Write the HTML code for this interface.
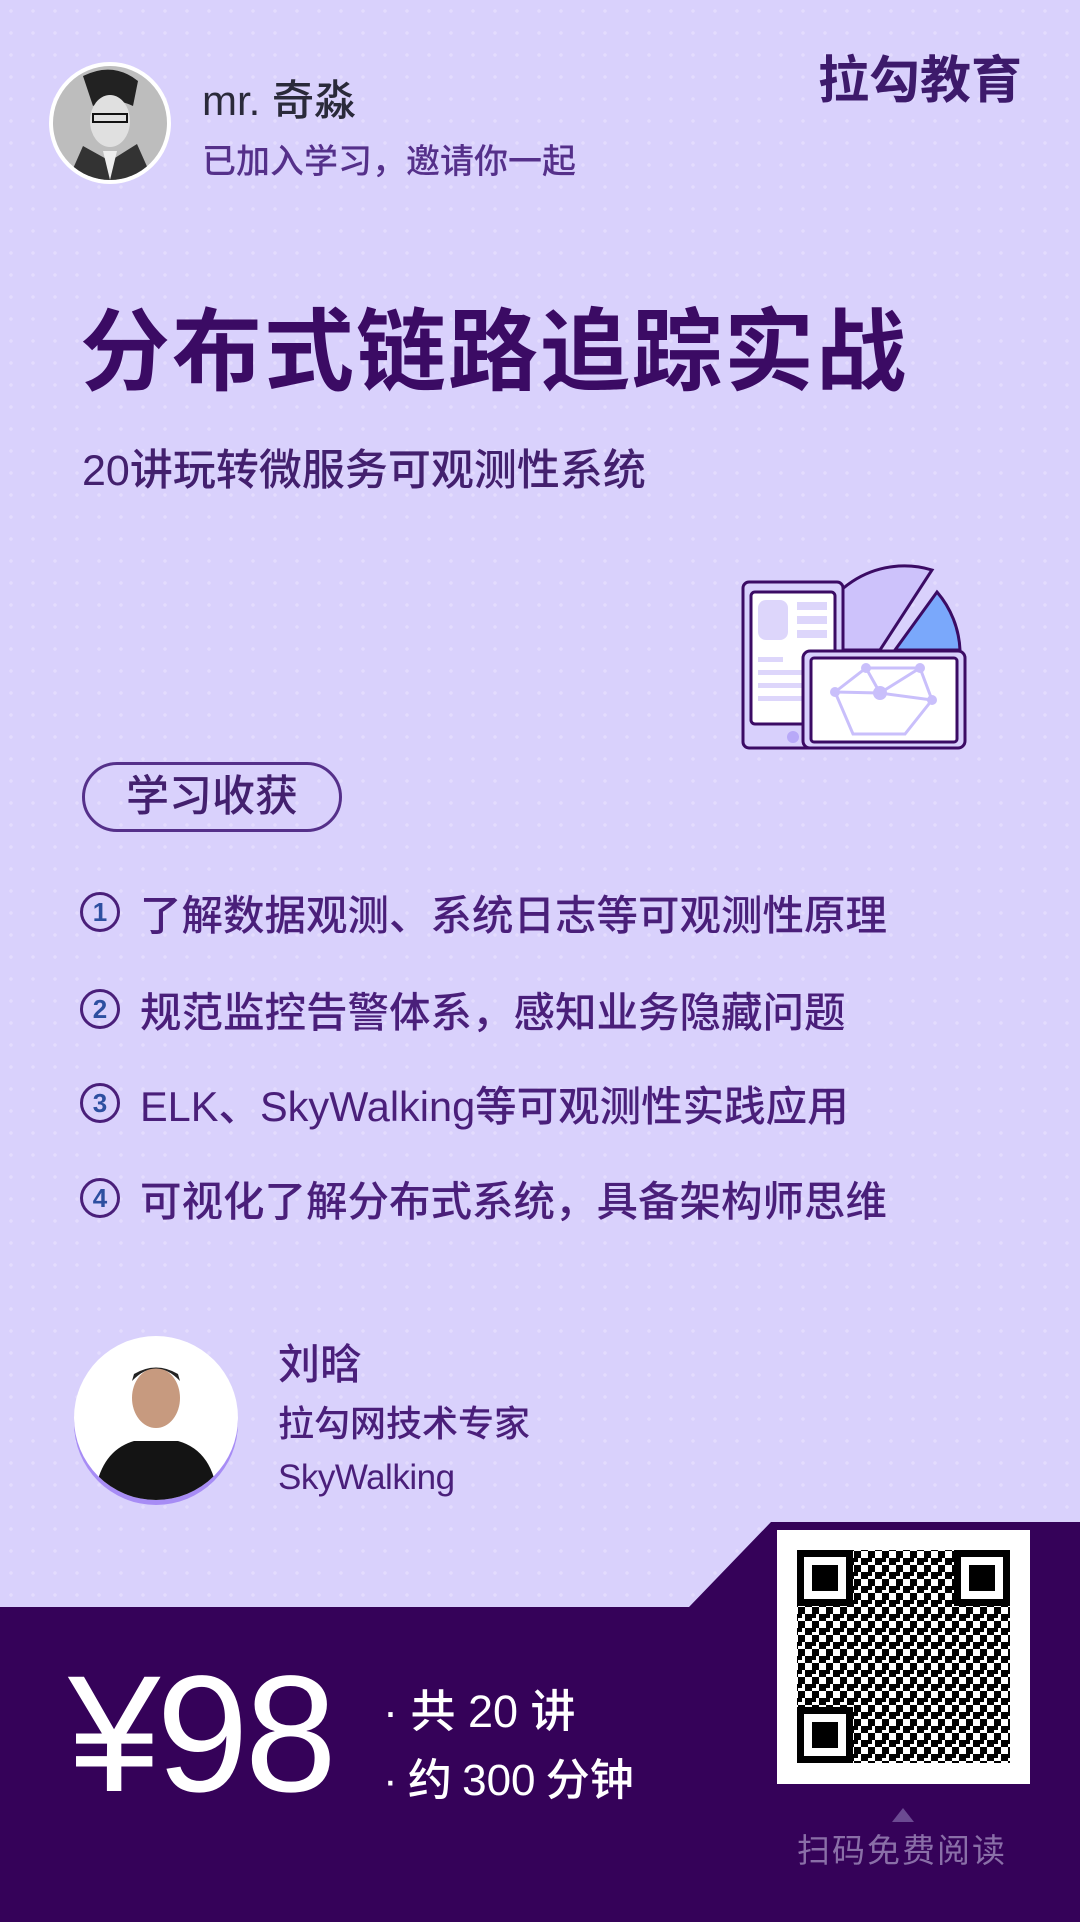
<!DOCTYPE html>
<html><head><meta charset="utf-8"><style>
*{margin:0;padding:0;box-sizing:border-box}
body{width:1080px;height:1922px;position:relative;overflow:hidden;background:#d9d1fc;font-family:"Liberation Sans","Noto Sans CJK SC",sans-serif;
background-image:radial-gradient(circle,#e3dcfd 1.5px,transparent 2px);background-size:22px 22px}
.a{position:absolute;white-space:nowrap;line-height:1}
.item{position:absolute;left:80px;display:flex;align-items:center;color:#4a1f7a;font-size:41.5px;font-weight:500}
.num{width:40px;height:40px;border:3px solid #4a1f7a;border-radius:50%;font-size:26px;display:flex;align-items:center;justify-content:center;color:#2d4fa0;margin-right:20px;font-weight:bold}
</style></head><body>
<div class="a" style="left:49px;top:62px;width:122px;height:122px;border-radius:50%;background:#fff;padding:4px">
<svg width="114" height="114" viewBox="0 0 114 114"><clipPath id="c"><circle cx="57" cy="57" r="57"/></clipPath><g clip-path="url(#c)"><rect width="114" height="114" fill="#bdbdbd"/><path d="M30 10 Q60 -5 85 15 L80 40 Q60 30 40 40Z" fill="#222"/><ellipse cx="57" cy="55" rx="20" ry="26" fill="#e0e0e0"/><path d="M15 114 L30 80 L57 95 L84 78 L100 114Z" fill="#333"/><path d="M50 85 L57 114 L64 85Z" fill="#eee"/><rect x="40" y="48" width="34" height="8" fill="none" stroke="#111" stroke-width="2"/></g></svg></div>
<div class="a" style="left:202px;top:80px;font-size:42px;color:#2a2a3a;font-weight:500">mr. 奇淼</div>
<div class="a" style="left:202px;top:145px;font-size:34px;color:#55308a;font-weight:500">已加入学习，邀请你一起</div>
<div class="a" style="left:818px;top:55px;font-size:51px;font-weight:bold;color:#3d1a6b">拉勾教育</div>
<div class="a" style="left:80px;top:308px;font-size:90px;font-weight:bold;color:#3b0b64;letter-spacing:2px">分布式链路追踪实战</div>
<div class="a" style="left:82px;top:450px;font-size:43px;color:#43206e;font-weight:500">20讲玩转微服务可观测性系统</div>
<svg class="a" style="left:730px;top:545px" width="250" height="215" viewBox="730 545 250 215">
<path d="M810 650 A95 95 0 0 1 932 570 L880 650Z" fill="#cdc2fb" stroke="#3b0b64" stroke-width="3"/>
<path d="M895 650 L937 592 A95 95 0 0 1 960 650Z" fill="#7aa8fb" stroke="#3b0b64" stroke-width="3"/>
<rect x="743" y="582" width="100" height="166" rx="6" fill="#d8d0fc" stroke="#3b0b64" stroke-width="3"/>
<rect x="751" y="592" width="84" height="132" rx="4" fill="#fff" stroke="#3b0b64" stroke-width="3"/>
<rect x="758" y="600" width="30" height="40" rx="8" fill="#ddd6fb"/>
<rect x="797" y="602" width="30" height="8" fill="#ddd6fb"/><rect x="797" y="616" width="30" height="8" fill="#ddd6fb"/><rect x="797" y="630" width="30" height="8" fill="#ddd6fb"/>
<rect x="758" y="657" width="25" height="5" fill="#ddd6fb"/><rect x="758" y="670" width="60" height="5" fill="#ddd6fb"/><rect x="758" y="683" width="60" height="5" fill="#ddd6fb"/><rect x="758" y="696" width="60" height="5" fill="#ddd6fb"/>
<circle cx="793" cy="737" r="6" fill="#b8a9f8"/>
<rect x="803" y="651" width="162" height="97" rx="7" fill="#d8d0fc" stroke="#3b0b64" stroke-width="3"/>
<rect x="811" y="658" width="146" height="84" rx="3" fill="#fff" stroke="#3b0b64" stroke-width="3"/>
<g stroke="#c9bffb" stroke-width="3" fill="none"><path d="M835 692 L866 668 L920 668 L932 700 L905 734 L853 734 Z M866 668 L880 693 L920 668 M835 692 L880 693 L932 700"/></g>
<g fill="#c9bffb"><circle cx="835" cy="692" r="5"/><circle cx="866" cy="668" r="5"/><circle cx="920" cy="668" r="5"/><circle cx="932" cy="700" r="5"/><circle cx="880" cy="693" r="7"/></g>
</svg>
<div class="a" style="left:82px;top:762px;width:260px;height:70px;border:3px solid #55308a;border-radius:35px;font-size:43px;color:#43206e;display:flex;align-items:center;justify-content:center;font-weight:500">学习收获</div>
<div class="item" style="top:882px"><span class="num">1</span>了解数据观测、系统日志等可观测性原理</div>
<div class="item" style="top:979px"><span class="num">2</span>规范监控告警体系，感知业务隐藏问题</div>
<div class="item" style="top:1073px"><span class="num">3</span>ELK、SkyWalking等可观测性实践应用</div>
<div class="item" style="top:1168px"><span class="num">4</span>可视化了解分布式系统，具备架构师思维</div>
<div class="a" style="left:74px;top:1336px;width:164px;height:164px;border-radius:50%;background:#fff;box-shadow:0 5px 0 #a78cf5;overflow:hidden">
<svg width="164" height="164"><ellipse cx="82" cy="62" rx="24" ry="30" fill="#c79a7f"/><path d="M58 45 Q82 20 106 45 L104 38 Q82 25 60 38Z" fill="#222"/><path d="M20 164 Q25 115 60 105 L104 105 Q140 115 144 164Z" fill="#141414"/></svg></div>
<div class="a" style="left:278px;top:1344px;font-size:42px;color:#4a1f7a;font-weight:500">刘晗</div>
<div class="a" style="left:278px;top:1406px;font-size:36px;color:#4a1f7a;font-weight:500">拉勾网技术专家</div>
<div class="a" style="left:278px;top:1460px;font-size:35px;color:#4a1f7a;letter-spacing:-0.5px">SkyWalking</div>
<svg class="a" style="left:0;top:1515px" width="1080" height="407"><path d="M0 92 L689 92 L771 7 L1080 7 L1080 407 L0 407Z" fill="#350259"/></svg>
<div class="a" style="left:777px;top:1530px;width:253px;height:254px;background:#fff">
<svg width="253" height="254" viewBox="0 0 253 254">
<defs><pattern id="q" width="14" height="14" patternUnits="userSpaceOnUse"><rect width="7" height="7" fill="#000"/><rect x="7" y="7" width="7" height="7" fill="#000"/><rect x="7" y="0" width="4" height="4" fill="#000"/></pattern></defs>
<rect x="20" y="20" width="213" height="213" fill="url(#q)"/>
<g><rect x="20" y="20" width="56" height="56" fill="#fff"/><rect x="23.5" y="23.5" width="49" height="49" fill="none" stroke="#000" stroke-width="7"/><rect x="35" y="35" width="26" height="26" fill="#000"/></g>
<g><rect x="177" y="20" width="56" height="56" fill="#fff"/><rect x="180.5" y="23.5" width="49" height="49" fill="none" stroke="#000" stroke-width="7"/><rect x="192" y="35" width="26" height="26" fill="#000"/></g>
<g><rect x="20" y="177" width="56" height="56" fill="#fff"/><rect x="23.5" y="180.5" width="49" height="49" fill="none" stroke="#000" stroke-width="7"/><rect x="35" y="192" width="26" height="26" fill="#000"/></g>
</svg></div>
<div class="a" style="left:68px;top:1652px;font-size:166px;color:#fff;letter-spacing:-4px">¥98</div>
<div class="a" style="left:383px;top:1689px;font-size:45px;color:#fff;font-weight:500;word-spacing:0px">· 共 20 讲</div>
<div class="a" style="left:383px;top:1759px;font-size:44px;color:#fff;font-weight:500;word-spacing:-2px">· 约 300 分钟</div>
<div class="a" style="left:892px;top:1808px;width:0;height:0;border-left:11px solid transparent;border-right:11px solid transparent;border-bottom:14px solid #6b4a92"></div>
<div class="a" style="left:797px;top:1834px;font-size:33px;color:#8a6fa8;letter-spacing:2px">扫码免费阅读</div>
</body></html>
